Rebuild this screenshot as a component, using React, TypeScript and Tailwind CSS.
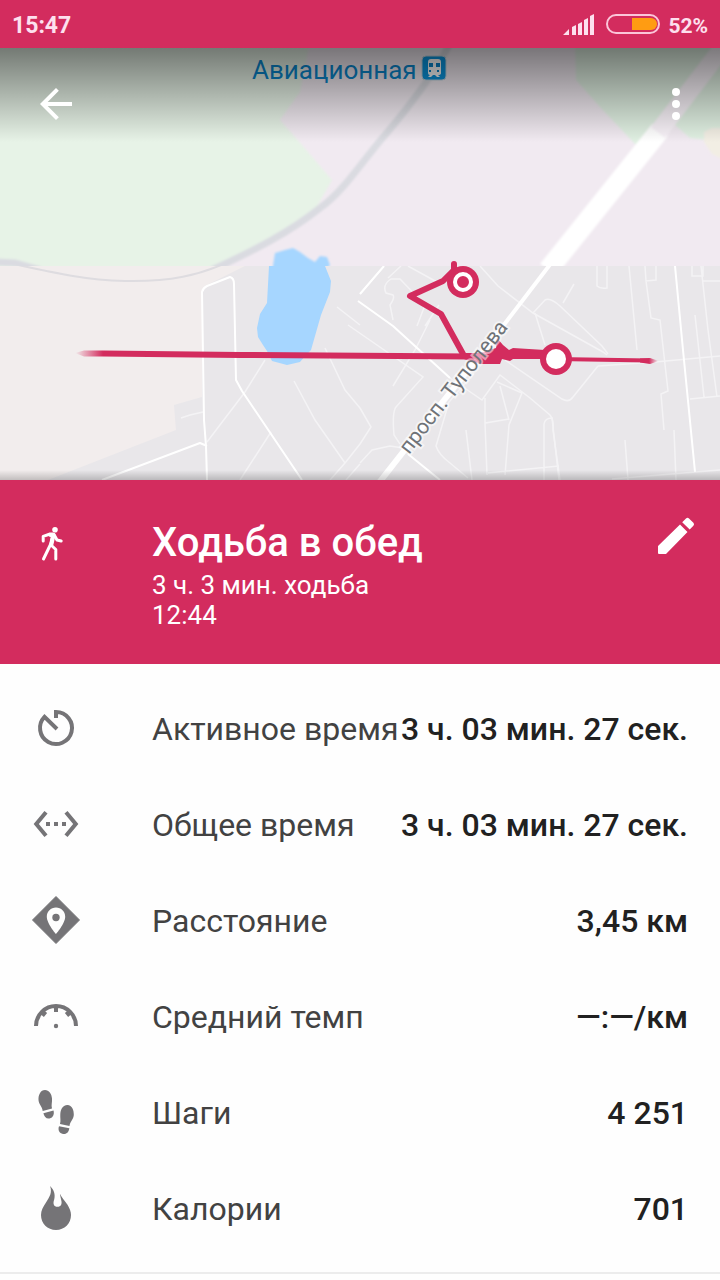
import React from "react";

type Stat = {
  label: string;
  value: string;
  icon: React.ReactNode;
};

const stats: Stat[] = [
  {
    label: "Активное время",
    value: "3 ч. 03 мин. 27 сек.",
    icon: (
      <path
        d="M24 14V8A16 16 0 1 1 12.5 12.9L25 25"
        fill="none"
        stroke="currentColor"
        strokeWidth="4"
      />
    ),
  },
  {
    label: "Общее время",
    value: "3 ч. 03 мин. 27 сек.",
    icon: (
      <path
        transform="scale(2)"
        d="M7.77 6.76 6.23 5.48.82 12l5.41 6.52 1.54-1.28L3.42 12zM7 13h2v-2H7zm10-2h-2v2h2zm-6 2h2v-2h-2zm6.77-7.52-1.54 1.28L20.58 12l-4.35 5.24 1.54 1.28L23.18 12z"
      />
    ),
  },
  {
    label: "Расстояние",
    value: "3,45 км",
    icon: (
      <>
        <path d="M24 0.5 47.5 24 24 47.5 0.5 24z" stroke="currentColor" strokeLinejoin="round" />
        <path d="M24 11.5c-5.2 0-9.2 4-9.2 9.2C14.8 27.5 24 38 24 38s9.2-10.5 9.2-17.3c0-5.2-4-9.2-9.2-9.2z" fill="#fefefe" />
        <circle cx="24" cy="21.5" r="3.7" />
      </>
    ),
  },
  {
    label: "Средний темп",
    value: "—:—/км",
    icon: (
      <>
        <path
          d="M4 34A20 20 0 0 1 44 34M24 13V20"
          fill="none"
          stroke="currentColor"
          strokeWidth="4"
        />
        <path d="M10 20l3.500 3M38 20l-3.500 3" fill="none" stroke="currentColor" strokeWidth="5" />
        <circle cx="24" cy="34" r="2.2" />
      </>
    ),
  },
  {
    label: "Шаги",
    value: "4 251",
    icon: (
      <>
        <path d="M13 2C8.5 2 6.2 7 6.5 12c.3 4.500 3.800 6.500 4.200 11l9.300-2.400c-1-3.600.3-6 0-10C19.600 5.500 17 2 13 2z" />
        <path d="M11.4 25.2 21.5 22.5c1 3.500-.3 7.200-4 8-3.300.6-5.300-2-6.100-5.300z" />
        <path d="M35.5 17c4.500.3 6.500 5 6.300 10-.3 4.500-3.800 6.500-4.300 11L28 36c1-3.500 0-6 .3-10 .4-5.500 3.200-9.200 7.200-9z" />
        <path d="M27 38.2 37.3 40.2c-.4 3.800-2.800 6.300-6.300 5.700-3.800-.7-5.300-4-4-7.700z" />
      </>
    ),
  },
  {
    label: "Калории",
    value: "701",
    icon: (
      <path d="M18 2c4 3.500 5.500 8.500 4.200 13.500-1.600 4.500-.3 7.300 3.300 7.300 3.500 0 4.700-3 3.800-6.300C28.800 14 28.300 12.500 28 9.700c1.500 4 5 7 7.500 11 2.200 3.600 3.500 6.800 3.500 10.300 0 8.500-6.500 15-15 15S9 39.500 9 31c0-4.500 2-8 5-12.500C17.500 13 20.500 8.500 18 2z" />
    ),
  },
];

const StatusBar = () => (
  <div className="flex h-12 items-center bg-[#d32c5e] px-3 font-bold text-[#fde0ee]">
    <span className="pt-1 text-[23px] leading-6">15:47</span>
    <svg className="ml-auto h-6 w-8" viewBox="562 12 32 24" fill="currentColor" aria-hidden="true">
      <path d="M563 35l6-6v6zM572 27l4-2v10h-4zM578 24l4-2v13h-4zM584 20l4-2v17h-4zM590 16l4-2v21h-4z" />
    </svg>
    <svg className="ml-3 h-6 w-14" viewBox="606 12 56 24" fill="none" aria-hidden="true">
      <rect x="607" y="15" width="52" height="18" rx="9" stroke="#fbc6d9" strokeWidth="2" />
      <path d="M632 18h19a6 6 0 0 1 0 12h-19z" fill="#ff9c12" />
    </svg>
    <span className="ml-1.5 pt-1 text-[21px] leading-6">52%</span>
  </div>
);

const MapView = () => (
  <svg className="block w-full" viewBox="0 48 720 432" role="img" aria-label="Карта маршрута">
    <defs>
      <linearGradient id="routeStart" gradientUnits="userSpaceOnUse" x1="75" x2="103" y1="0" y2="0">
        <stop offset="0" stopColor="#d32c5e" stopOpacity="0" />
        <stop offset="1" stopColor="#d32c5e" />
      </linearGradient>
      <linearGradient id="routeEnd" gradientUnits="userSpaceOnUse" x1="649" x2="658" y1="0" y2="0">
        <stop offset="0" stopColor="#d32c5e" />
        <stop offset="1" stopColor="#d32c5e" stopOpacity="0" />
      </linearGradient>
      <linearGradient id="topShade" x1="0" x2="0" y1="0" y2="1">
        <stop offset="0" stopOpacity="0.5" />
        <stop offset="1" stopOpacity="0" />
      </linearGradient>
      <linearGradient id="bottomShade" x1="0" x2="0" y1="0" y2="1">
        <stop offset="0" stopOpacity="0" />
        <stop offset="1" stopOpacity="0.2" />
      </linearGradient>
      <clipPath id="farTiles">
        <rect x="0" y="48" width="720" height="218" />
      </clipPath>
      <clipPath id="nearTiles">
        <rect x="0" y="266" width="720" height="214" />
      </clipPath>
      <filter id="soft">
        <feGaussianBlur stdDeviation="1.2" />
      </filter>
    </defs>

    {/* low detail tiles */}
    <g clipPath="url(#farTiles)">
      <rect y="48" width="720" height="218" fill="#f1eaf1" />
      <g filter="url(#soft)">
        <path d="M-5 40H310L300 92 280 120 302 145 332 180 315 210 265 245 210 270H-5z" fill="#e7f3e7" />
        <path d="M575 40H725V142L690 138 674 124 637 146 600 107 576 80z" fill="#e0f0e2" />
        <path d="M704 132l8-4h12v32l-12-6-8-12z" fill="#f2eee4" />
        <path
          d="M452 40C435 72 408 108 385 135 360 164 343 192 320 208 290 232 255 250 212 270M-5 262L15 263 40 270"
          fill="none"
          stroke="#dadbe1"
          strokeWidth="7"
        />
        <path d="M548 270L660 130" fill="none" stroke="#fff" strokeWidth="20" />
        <path d="M658 132.500L730 38" fill="none" stroke="#f8f2f8" strokeWidth="18" />
        <path d="M272 272L275 253 285 250 293 248 300 252 308 258 315 262 320 256 327 257 330 265 324 272z" fill="#a6d6ff" />
      </g>
    </g>

    {/* detailed tiles */}
    <g clipPath="url(#nearTiles)">
      <rect y="266" width="720" height="214" fill="#e9e7ea" />
      <path d="M0 266H245L205 286 202 292V397L174 405 176 430 48 480H0z" fill="#f2eded" />
      <path d="M0 261C55 273 85 280 125 281 170 282 200 275 228 262" fill="none" stroke="#dedce0" strokeWidth="2" />
      <path
        d="M269 266L267 303 260 314 257 328 258 337 263 345 267 351 272 361 287 365 300 362 305 356 311 350 321 315 330 292 331 281 325 266z"
        fill="#a6d6ff"
      />
      <g fill="none" stroke="#f4f3f5" strokeWidth="1.500">
        <path d="M265 360L245 392 207 442M271 432L240 480M181 418L190 415 203 412M294 381L315 420 345 463M325 348L345 390 360 408M337 307L360 325M345 463L330 480M345 463L360 444M346 480L360 464M360 408L371 427 360 444" />
        <path d="M384 266L360 294M401 266L388 278M393 320L390 305Q395 298 393 295L386 293Q382 285 391 279H400L425 305 417 326" />
        <path d="M408 266L437 282M480 266L498 286 533 313 603 352 607 355M439 305L425 326M430 320L415 350 393 386" />
        <path d="M348 325L423 377 396 407Q392 412 394 435L400 444M360 463L372 450 390 446 403 448M474 373L449 402 436 446Q439 455 450 463L468 478" />
        <path d="M450 378L482 400 500 375 530 398 550 415Q554 420 553 430L560 480" />
        <path d="M533 313L545 300Q550 297 560 306L602 346 608 354M563 303L574 284M535 313L545 345M598 366L573 397Q569 403 562 399L505 360M598 366L655 362 720 356" />
        <path d="M497 382L522 393 509 425 505 475M500 386L509 420M485 398V423L509 419M485 423L487 475M544 480V424Q545 418 552 418L559 480M488 473L559 466M466 430L472 480" />
        <path d="M597 266V286Q600 289 607 288V266M629 266L637 350M645 266L646 281 656 280V266M646 281L651 318 660 320 668 391 661 394 664 430M692 266V276H703V266M703 281H720M701 266L708 330 717 397M695 315L704 397M690 399L720 396M625 440L628 480M674 430L676 480M612 479L720 470" />
      </g>
      <g fill="none" stroke="#fff" strokeLinejoin="round">
        <path d="M207 480L206 446 204 420 202 292Q203 288 207 286L230 277Q234 278 234 284L236 380 242 391 302 480M102 480L200 443 207 446" strokeWidth="2" />
        <path d="M384 266L360 294M358 301L393 326 450 378M408 454L440 480M675 266L683 350 695 472" strokeWidth="2" />
        <path d="M555 258L500 330" strokeWidth="4" />
        <path d="M500 330L425 424 378 484" strokeWidth="6" />
      </g>
    </g>

    {/* walked route */}
    <g fill="none" stroke="#d32c5e" strokeLinejoin="round">
      <path d="M103 353.500L240 355 470 356.500" strokeWidth="6" />
      <path d="M463 354L441 314 410 296 443 281 454 270V264" strokeWidth="6" strokeLinecap="round" />
      <path d="M556 359L649 360.500" strokeWidth="4" />
    </g>
    <path d="M75 353L84 350.500H103V356.500H84z" fill="url(#routeStart)" />
    <path d="M640 358.500L650 358 659 361 650 364 640 362.500z" fill="url(#routeEnd)" />
    <path
      d="M464 353L480 353 496 348 497 338 503 345 509 350 513 348 545 350V359H513L510 361 502 359 500 364H480L464 359z"
      fill="#d32c5e"
    />
    <circle cx="463" cy="282" r="16" fill="#d32c5e" />
    <circle cx="463" cy="282" r="8" fill="none" stroke="#fff" strokeWidth="4" />
    <circle cx="556" cy="359" r="16" fill="#d32c5e" />
    <circle cx="556" cy="359" r="10" fill="#fff" />

    <text
      transform="translate(409 455) rotate(-52)"
      fontSize="21"
      fill="#6f7378"
      stroke="#fff"
      strokeOpacity="0.5"
      strokeWidth="4"
      paintOrder="stroke"
    >
      просп. Туполева
    </text>
    <text x="252" y="79" fontSize="26" fill="#0a86cc">
      Авиационная
    </text>
    <rect x="422" y="56" width="24" height="24" rx="4" fill="#0a96e0" stroke="#c0d4e0" />
    <path d="M431 59h7q3 0 3 3v11q0 2-3 2l2 2h-3l-2-2h-2l-2 2h-3l2-2q-2 0-2-2V62q0-3 3-3z" fill="#fff" />
    <path d="M429 63h4v4h-4zM436 63h4v4h-4zM429 70h2v2h-2zM437 70h2v2h-2z" fill="#0a86cc" />

    <rect y="48" width="720" height="94" fill="url(#topShade)" />
    <rect y="470" width="720" height="10" fill="url(#bottomShade)" />
  </svg>
);

const App = () => {
  return (
    <div className="min-h-screen bg-[#fefefe] font-[Roboto,sans-serif]">
      <StatusBar />

      <div className="relative">
        <MapView />
        <div className="absolute inset-x-0 top-0 flex h-28 items-center justify-between px-8">
          <button type="button" aria-label="Назад" className="text-white">
            <svg className="size-12" viewBox="0 0 24 24" fill="currentColor">
              <path d="M20 11H7.83l5.59-5.59L12 4l-8 8 8 8 1.410-1.410L7.830 13H20z" />
            </svg>
          </button>
          <button type="button" aria-label="Ещё" className="-mr-3 text-white">
            <svg className="size-12" viewBox="0 0 24 24" fill="currentColor">
              <path d="M12 8a2 2 0 1 0 0-4 2 2 0 0 0 0 4zm0 2a2 2 0 1 0 0 4 2 2 0 0 0 0-4zm0 6a2 2 0 1 0 0 4 2 2 0 0 0 0-4z" />
            </svg>
          </button>
        </div>
      </div>

      <header className="flex items-start bg-[#d32c5e] pt-9 pr-6 pb-[34px] text-white">
        <div className="flex h-14 w-38 shrink-0 items-center pl-10">
          <svg className="h-9 w-6" viewBox="0 0 24 36" fill="none" stroke="currentColor" strokeWidth="3" strokeLinecap="round" strokeLinejoin="round" aria-hidden="true">
            <circle cx="15" cy="3.7" r="2.8" fill="currentColor" stroke="none" />
            <path d="M3.2 15V10.3L10 8h3L10.500 18.500 3.500 33M10.500 18.500 15.800 23.500V33M14 8.500 17 14 21.200 15" />
            <path d="M10.5 9h3l-2 9" strokeWidth="4" />
          </svg>
        </div>
        <div className="grow">
          <h1 className="text-[40px] leading-[54px] font-medium">Ходьба в обед</h1>
          <p className="text-[26px] leading-[30px]">3 ч. 3 мин. ходьба</p>
          <p className="text-[26px] leading-[30px]">12:44</p>
        </div>
        <button type="button" aria-label="Изменить">
          <svg className="size-10" viewBox="0 0 40 40" fill="currentColor">
            <path d="M2 30 24 8.5 31.5 16 10 38H3Q2 38 2 37zM26.200 6.200 30 2.400Q31.500 1 33 2.400L37.400 6.800Q38.800 8.300 37.400 9.800L33.700 13.500z" />
          </svg>
        </button>
      </header>

      <ul className="border-b-2 border-[#ececec] py-4">
        {stats.map((stat) => (
          <li key={stat.label} className="flex h-24 items-center px-8 text-[32px] leading-10">
            <svg className="mr-18 size-12 shrink-0 text-[#757477]" viewBox="0 0 48 48" fill="currentColor" aria-hidden="true">
              {stat.icon}
            </svg>
            <span className="pt-0.5 whitespace-nowrap text-[#424242]">{stat.label}</span>
            <span className="ml-auto pt-0.5 font-medium whitespace-nowrap text-[#212121]">{stat.value}</span>
          </li>
        ))}
      </ul>
    </div>
  );
};

export default App;
